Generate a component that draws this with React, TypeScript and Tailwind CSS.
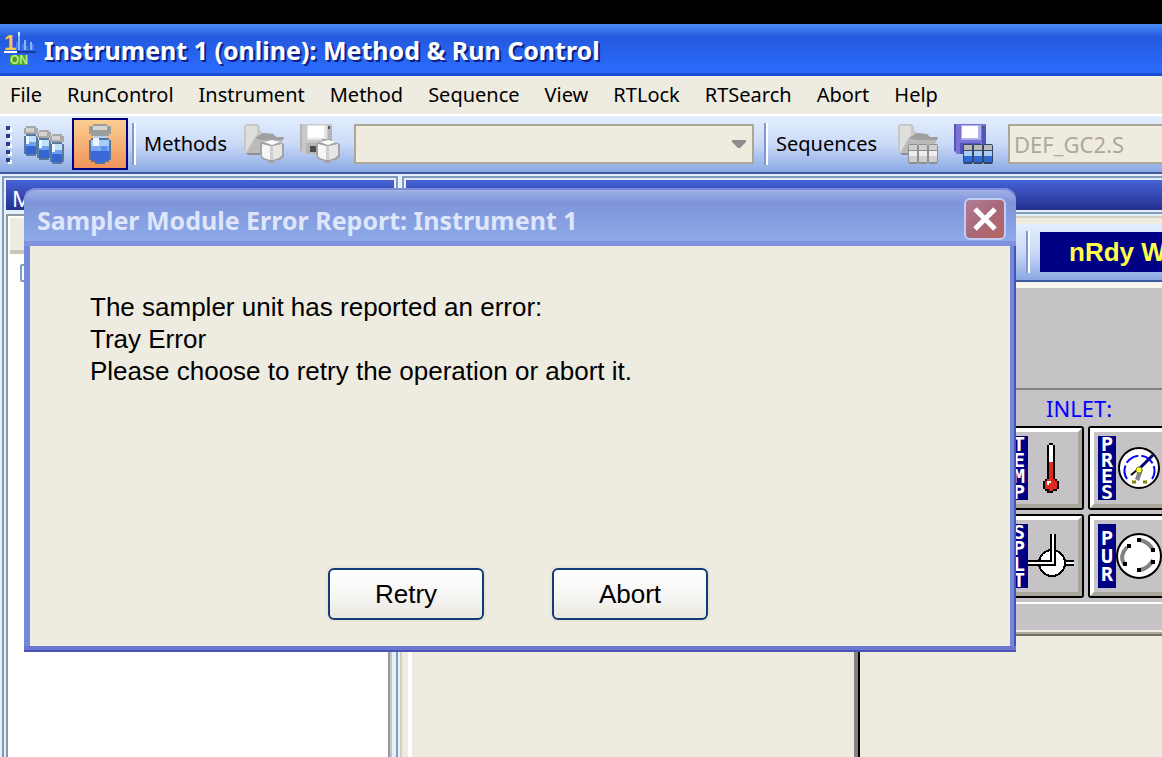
import { ReactNode } from "react";

const menuItems = [
  "File",
  "RunControl",
  "Instrument",
  "Method",
  "Sequence",
  "View",
  "RTLock",
  "RTSearch",
  "Abort",
  "Help",
];

/* --------------------------
  Icons
--------------------------- */
const AppIcon = () => (
  <svg width="34" height="36" viewBox="0 0 34 36" shapeRendering="crispEdges" aria-hidden="true">
    <text x="0" y="18" fontSize="22" fontWeight="bold" fontFamily="Liberation Sans, sans-serif" fill="#f7c84a">1</text>
    <path d="M14 4h2v14h-2zM20 8h2v10h-2zM26 10h2v8h-2z" fill="#8db4f5" />
    <path d="M14 0h2v4h-2z" fill="#d6e4ff" />
    <path d="M12 10h2v8h-2zM18 12h2v6h-2zM22 14h2v4h-2zM28 12h2v6h-2z" fill="#4a7ae6" />
    <path d="M0 19h13v2H0z" fill="#fff" />
    <path d="M13 19h19v2H13z" fill="#1a3d9c" />
    <rect x="6" y="23" width="18" height="10" fill="#4f9e2c" />
    <text x="6" y="32" fontSize="12" fontWeight="bold" fontFamily="Liberation Sans, sans-serif" fill="#b5ee84">ON</text>
  </svg>
);

const SmallVial = ({ x, y }: { x: number; y: number }) => (
  <g transform={`translate(${x} ${y})`}>
    <path d="M2 0h10v2h2v6H0V2h2z" fill="#a9aaa8" />
    <path d="M2 2h8v4H2z" fill="#d3d2ce" />
    <path d="M2 8h10v2h2v18h-2v2H2v-2H0V10h2z" fill="#58799f" />
    <path d="M2 10h10v8H2z" fill="#c3e0fa" />
    <path d="M2 16h10v4H2z" fill="#6ea0f0" />
    <path d="M2 20h10v8H2z" fill="#3566cf" />
    <path d="M2 10h3v8H2z" fill="#edf7ff" />
  </g>
);

const VialsIcon = () => (
  <svg width="40" height="40" viewBox="0 0 40 40" shapeRendering="crispEdges" aria-hidden="true">
    <SmallVial x={0} y={2} />
    <SmallVial x={13} y={6} />
    <SmallVial x={26} y={10} />
  </svg>
);

const VialIcon = () => (
  <svg width="22" height="40" viewBox="0 0 22 40" shapeRendering="crispEdges" aria-hidden="true">
    <path d="M4 0h14v2h4v8h-2v2H2v-2H0V2h4z" fill="#9b9c9c" />
    <path d="M4 2h14v4H4z" fill="#d6d5d1" />
    <path d="M4 12h14v2H4z" fill="#b7cbe4" />
    <path d="M2 14h18v2h2v20h-2v2h-4v2H6v-2H2v-2H0V16h2z" fill="#56759e" />
    <path d="M2 16h18v6H2z" fill="#a8cdf6" />
    <path d="M4 14h6v8H4z" fill="#eaf5ff" />
    <path d="M2 22h18v6H2z" fill="#7ba9f7" />
    <path d="M2 27h18v9h-4v2H6v-2H2z" fill="#3c68d6" />
    <path d="M12 22h6v5h-6z" fill="#5f8eee" />
  </svg>
);

const Folder = () => (
  <g>
    <path d="M0 2L2 0h12l2 3v4h2v22H2l-2-3z" fill="#c8c8c6" />
    <path d="M2 2h11v8L2 28z" fill="#dededc" />
    <path d="M3 29l8-15 8-5 10 1 3 3h8l-5 12-5 4z" fill="#bbbbba" />
    <path d="M11 14l8-5 10 1 3 3h8l-1 3H18z" fill="#a09f9f" />
    <path d="M2 29h16v2H4z" fill="#8f9094" />
  </g>
);

const Cube = () => (
  <g>
    <path d="M16 19l6-2v-2h10v2l8 3v13l-4 3-6 1v2h-6v-2l-6-2-2-4z" fill="#a3a3a5" />
    <path d="M18 20l8 2v14l-6-2-2-2z" fill="#f6f6f6" />
    <path d="M29 22l9-2v11l-3 3-6 2z" fill="#e6e6e6" />
    <path d="M20 18l8-2 8 2-8 3z" fill="#fdfdfd" />
    <path d="M26 22h3v14h-3z" fill="#cfcfd1" />
  </g>
);

type FloppyProps = { body: string; edge: string; shutter: string };

const Floppy = ({ body, edge, shutter }: FloppyProps) => (
  <g>
    <path d="M0 0h32v30H3l-3-3z" fill={body} />
    <path d="M0 0h2v27H0zM28 2h4v28h-4z" fill={edge} />
    <path d="M7 1h20v15H7z" fill={shutter} />
    <path d="M8 2h16v12H8z" fill="#fff" />
    <path d="M6 19h20v11H6z" fill={edge} />
    <path d="M10 22h6v6h-6z" fill="#4c4c4c" />
    <path d="M28 2h2v3h-2z" fill="#555" />
  </g>
);

type RackProps = { x: number; cap: string; top: string; bottom: string; line: string };

const Rack = ({ x, cap, top, bottom, line }: RackProps) => (
  <g>
    {[0, 10, 20].map((dx) => (
      <g key={dx} transform={`translate(${x + dx} 20)`}>
        <path d="M1 0h8l1 2v16l-1 2H1l-1-2V2z" fill={line} />
        <path d="M1 1h8v5H1z" fill={cap} />
        <path d="M1 7h8v5H1z" fill={top} />
        <path d="M1 12h8v6H1z" fill={bottom} />
      </g>
    ))}
  </g>
);

const IconBox = ({ children }: { children: ReactNode }) => (
  <svg width="40" height="40" viewBox="0 0 40 40" aria-hidden="true">
    {children}
  </svg>
);

const ThermometerIcon = () => (
  <svg width="20" height="50" viewBox="0 0 20 50" shapeRendering="crispEdges" aria-hidden="true">
    <path d="M6 2h2V0h4v2h2v34h2v2h2v8h-2v2h-4v2H6v-2H4v-2H2v-8h2v-2h2z" fill="#000" />
    <path d="M8 2h4v18H8z" fill="#fff" />
    <path d="M8 19h4v17h2v2h2v8h-4v2H8v-2H4v-8h2v-2h2z" fill="#e02a1d" />
    <path d="M6 38h4v2H8v2H6z" fill="#fff" />
  </svg>
);

const GaugeIcon = () => (
  <svg width="42" height="42" viewBox="0 0 42 42" aria-hidden="true">
    <circle cx="21" cy="21" r="20" fill="#fff" stroke="#000" strokeWidth="2" />
    <path d="M9 32A15 15 0 1 1 34 32" fill="none" stroke="#00f" strokeWidth="2" strokeDasharray="14 3" />
    <path d="M17 32l4-11 4 2-4 11z" fill="#848284" />
    <path d="M21 22L35 8" stroke="#00007b" strokeWidth="3" />
    <path d="M13 28l6-5" stroke="#000" strokeWidth="2" />
    <circle cx="21" cy="23" r="3" fill="#ffff4a" stroke="#848200" />
    <path d="M14 35h4M25 35h4" stroke="#848200" strokeWidth="3" />
  </svg>
);

const SplitIcon = () => (
  <svg width="46" height="44" viewBox="0 0 46 44" shapeRendering="crispEdges" aria-hidden="true">
    <circle cx="24" cy="29" r="13" fill="#fff" stroke="#000" strokeWidth="2" />
    <path d="M23 0h4v30h-4z" fill="#fff" />
    <path d="M0 27h24v4H0zM38 27h8v4h-8z" fill="#fff" />
    <path d="M0 27h23V0M0 31h27V0M37 27h9M37 31h9" fill="none" stroke="#000" strokeWidth="2" />
  </svg>
);

const PurgeIcon = () => (
  <svg width="46" height="48" viewBox="1 0 46 48" aria-hidden="true">
    <circle cx="24" cy="24" r="22" fill="#fff" stroke="#000" strokeWidth="2" />
    <path d="M25 8q9 2 13 10M25 38q9-2 13-10M12 15q-8 9-3 17" fill="none" stroke="#848284" strokeWidth="4" />
    <path d="M22 6h4v4h-4zM36 16h4v4h-4zM12 12h4v4h-4zM8 30h4v4H8zM36 28h4v4h-4zM22 36h4v4h-4z" fill="#000" />
  </svg>
);

/* --------------------------
  Toolbar parts
--------------------------- */
const Separator = () => (
  <div className="h-[42px] w-1 shrink-0 border-l-2 border-r-2 border-l-[#7d97d8] border-r-white" />
);

type ToolButtonProps = { label: string; disabled?: boolean; children: ReactNode };

const ToolButton = ({ label, disabled, children }: ToolButtonProps) => (
  <button aria-label={label} disabled={disabled} className="h-10 shrink-0">
    {children}
  </button>
);

const Grip = () => (
  <div className="flex flex-col gap-1 pl-1.5">
    {[0, 1, 2, 3, 4].map((n) => (
      <span key={n} className="block size-1 bg-[#27408b] shadow-[2px_2px_0_#fff]" />
    ))}
  </div>
);

/* --------------------------
  Status buttons of the inlet
--------------------------- */
type StatusButtonProps = { letters: string; children: ReactNode };

const StatusButton = ({ letters, children }: StatusButtonProps) => (
  <button
    aria-label={letters}
    className="h-[84px] w-[84px] shrink-0 rounded-[3px] border-2 border-black bg-[#c6c3c6]"
  >
    <span className="flex h-full items-center border-4 border-t-white border-r-[#a8a69a] border-b-[#a8a69a] border-l-white pl-1">
      <span
        className={`flex h-16 w-[18px] shrink-0 flex-col items-center justify-center bg-[#000084] font-['DejaVu_Sans_Mono',monospace] text-xl font-bold text-white ${
          letters.length > 3 ? "leading-4" : "leading-[18px]"
        }`}
      >
        {letters.split("").map((letter, i) => (
          <span key={i}>{letter}</span>
        ))}
      </span>
      <span className="flex flex-1 justify-center pr-1">{children}</span>
    </span>
  </button>
);

const ErrorDialog = () => (
  <div
    role="dialog"
    aria-labelledby="dialog-title"
    className="absolute top-[188px] left-6 w-[992px] rounded-t-xl bg-[#7389d9] shadow-[inset_-2px_-2px_0_#4a52b5]"
  >
    <div className="flex h-[58px] items-center justify-between rounded-t-xl bg-linear-to-b from-[#a6b6ea] via-[#7f95d9] via-25% to-[#8ca8e8] to-85% pr-2.5 pl-[13px] shadow-[inset_0_2px_0_#7c8bd9,inset_0_-5px_0_#7f92dc]">
      <h2 id="dialog-title" className="pt-1.5 font-['Noto_Sans',sans-serif] text-[25px] font-bold text-[#dfe6fb]">
        Sampler Module Error Report: Instrument 1
      </h2>
      <button
        aria-label="Close"
        className="mt-1 flex size-[42px] items-center justify-center rounded-md border-2 border-[#c3cdf3] bg-linear-to-br from-[#b27c96] via-[#a8687a] to-[#b8645f]"
      >
        <svg width="24" height="24" viewBox="0 0 24 24" aria-hidden="true">
          <path d="M2 2l20 20M22 2L2 22" stroke="#fff" strokeWidth="5" />
        </svg>
      </button>
    </div>
    <div className="mx-1.5 bg-[#eeebe0] px-[60px] pt-[45px] pb-[26px] font-['Liberation_Sans',Arial,sans-serif] text-[26px] leading-8">
      <p>The sampler unit has reported an error:</p>
      <p>Tray Error</p>
      <p>Please choose to retry the operation or abort it.</p>
      <div className="mt-[181px] flex justify-center gap-[68px] pr-1">
        {["Retry", "Abort"].map((label) => (
          <button
            key={label}
            className="h-[52px] w-[156px] rounded-md border-2 border-[#123c74] bg-linear-to-b from-white via-[#f5f4f1] via-60% to-[#eae6df] shadow-[0_0_0_2px_#e8e4d7]"
          >
            {label}
          </button>
        ))}
      </div>
    </div>
    <div className="h-1.5 border-b-2 border-[#4a52b5] bg-[#6b78d0]" />
  </div>
);

const App = () => {
  return (
    <div className="relative flex min-h-screen flex-col overflow-hidden bg-[#eeebe0] font-['Noto_Sans',sans-serif] text-xl text-black">
      <div className="h-6 bg-black" />

      {/* Title bar */}
      <header className="flex h-[52px] items-center gap-1.5 bg-linear-to-b from-[#4a8cf5] via-[#2459de] via-25% to-[#2a6afa] to-85% pl-1 shadow-[inset_0_-3px_0_#1c4bd3]">
        <AppIcon />
        <h1 className="text-[25px] font-bold text-white [text-shadow:2px_2px_0_#0c1f84]">
          Instrument 1 (online): Method &amp; Run Control
        </h1>
      </header>

      {/* Menu */}
      <nav className="flex h-10 items-center gap-[25px] border-b-2 border-white pl-2.5">
        {menuItems.map((item) => (
          <button key={item} className="shrink-0">
            {item}
          </button>
        ))}
      </nav>

      {/* Main toolbar */}
      <div className="flex h-[58px] items-center border-b-2 border-[#3d5a9c] bg-linear-to-b from-[#e3eefe] via-[#cbdaf8] to-[#8aa9e3]">
        <Grip />
        <div className="flex items-center gap-2 pr-1 pl-3.5">
          <ToolButton label="All vials">
            <VialsIcon />
          </ToolButton>
          <button
            aria-label="Single vial"
            aria-pressed="true"
            className="flex h-[52px] w-14 items-center justify-center border-2 border-[#000080] bg-linear-to-b from-[#fbcf92] to-[#ef935a]"
          >
            <VialIcon />
          </button>
        </div>
        <Separator />
        <label htmlFor="methods" className="w-[108px] shrink-0 pl-2">
          Methods
        </label>
        <div className="flex gap-4 pr-3.5">
          <ToolButton label="Open method" disabled>
            <IconBox>
              <Folder />
              <Cube />
            </IconBox>
          </ToolButton>
          <ToolButton label="Save method" disabled>
            <IconBox>
              <Floppy body="#c9c9c9" edge="#b5b5b5" shutter="#e4e4e4" />
              <Cube />
            </IconBox>
          </ToolButton>
        </div>
        <div className="relative w-[400px] shrink-0">
          <select
            id="methods"
            disabled
            className="block h-10 w-full appearance-none border-2 border-[#aca899] bg-[#f0ebdf] px-1.5"
          />
          <svg width="14" height="8" viewBox="0 0 14 8" className="absolute top-4 right-2" aria-hidden="true">
            <path d="M0 0h14v2L8 8H6L0 2z" fill="#8d8d8d" />
          </svg>
        </div>
        <div className="w-2.5 shrink-0" />
        <Separator />
        <label htmlFor="sequences" className="w-[130px] shrink-0 pl-2">
          Sequences
        </label>
        <div className="flex gap-4 pr-3.5">
          <ToolButton label="Open sequence" disabled>
            <IconBox>
              <Folder />
              <Rack x={10} cap="#d0d0d0" top="#eeeeee" bottom="#cfcfcf" line="#8f8f92" />
            </IconBox>
          </ToolButton>
          <ToolButton label="Save sequence">
            <IconBox>
              <Floppy body="#7b72d2" edge="#4f55bd" shutter="#b0b0ee" />
              <Rack x={9} cap="#b9b9b9" top="#a9cdf5" bottom="#2c6bd6" line="#344660" />
            </IconBox>
          </ToolButton>
        </div>
        <select
          id="sequences"
          disabled
          className="h-10 min-w-[154px] flex-1 appearance-none border-2 border-r-0 border-[#aca899] bg-[#f0ebdf] pl-1 text-[22px] text-[#aca899] opacity-100"
        >
          <option>DEF_GC2.S</option>
        </select>
      </div>

      {/* Workspace */}
      <main className="flex flex-1 bg-[#e6effc]">
        <aside className="mt-0.5 ml-0.5 flex w-[396px] shrink-0 flex-col border-2 border-b-0 border-[#7f9db9] p-0.5 pb-0">
          <h2 className="h-[30px] bg-linear-to-b from-[#4763d8] to-[#25308f] pl-1.5 text-[22px] leading-9 text-white">
            Method
          </h2>
          <div className="mt-1 mr-1 flex-1 border-2 border-b-0 border-[#8e9a9e] bg-white pt-0.5 pl-0.5 shadow-[2px_0_0_#cbc7b8]">
            <div className="h-9 border-b-4 border-[#cbc7b8] bg-[#eeebe0]" />
            <div className="mt-2.5 ml-2.5 size-[18px] rounded-xs border-2 border-[#7f9db9]" />
          </div>
        </aside>

        <section className="mt-0.5 ml-0.5 flex flex-1 flex-col">
          <div className="ml-0.5 border-t-2 border-l-2 border-[#7f9db9] pt-0.5 pl-0.5">
            <div className="h-[30px] bg-linear-to-b from-[#4763d8] to-[#25308f]" />
          </div>
          <div className="mt-0.5 flex flex-1 flex-col border-t-2 border-l-2 border-t-[#7f9db9] border-l-[#d5cfbd] bg-[#f0ebdf]">
            <div className="h-2.5 border-t-2 border-b-6 border-t-[#e6effc] border-b-[#f0ebdf] bg-[#d5cfbd]" />

            {/* Status strip */}
            <div className="flex h-[58px] items-center border-b-2 border-[#3d5a9c] bg-linear-to-b from-[#e3eefe] via-[#cbdaf8] to-[#8aa9e3] pl-[624px]">
              <Separator />
              <div className="ml-2.5 h-10 w-0 flex-1 overflow-hidden bg-[#000084] pl-[29px] font-['Liberation_Sans',Arial,sans-serif] text-[26px] leading-10 font-bold whitespace-nowrap text-[#ffff4a]">
                nRdy Wait
              </div>
            </div>

            {/* Inlet panel */}
            <div className="ml-1.5 border-t-6 border-l-4 border-t-[#f8f6ee] border-l-white bg-[#c6c3c6]">
              <div className="h-[102px] border-b-2 border-[#848284]" />
              <div className="pl-[588px]">
                <h3 className="h-9 pl-[46px] text-[22px] leading-9 text-[#0000ff]">INLET:</h3>
                <div className="grid w-[172px] grid-cols-2 gap-1">
                  <StatusButton letters="TEMP">
                    <ThermometerIcon />
                  </StatusButton>
                  <StatusButton letters="PRES">
                    <GaugeIcon />
                  </StatusButton>
                  <StatusButton letters="SPLT">
                    <SplitIcon />
                  </StatusButton>
                  <StatusButton letters="PUR">
                    <PurgeIcon />
                  </StatusButton>
                </div>
              </div>
              <div className="mt-1 h-[30px] border-t-2 border-b-2 border-t-white border-b-[#eeebe0]" />
              <div className="h-1 border-b-2 border-[#73706a] bg-[#aca899]" />
            </div>

            {/* Lower panes */}
            <div className="ml-1.5 flex flex-1 border-l-4 border-white bg-[#eeebe0]">
              <div className="w-[448px] border-r-2 border-black shadow-[inset_-4px_0_0_#848284]" />
            </div>
          </div>
        </section>
      </main>

      <ErrorDialog />
    </div>
  );
};

export default App;
